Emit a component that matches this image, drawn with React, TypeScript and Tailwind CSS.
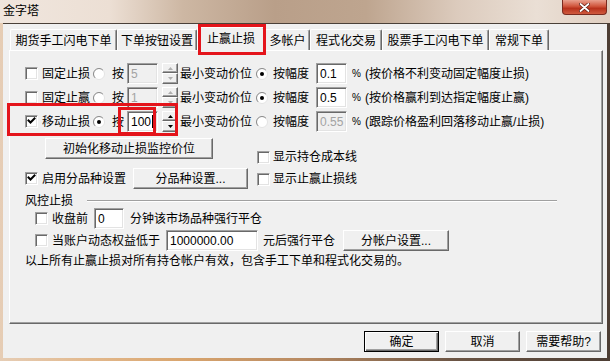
import React from "react";

const raised =
  "bg-[#f0f0f0] border border-t-white border-l-white border-b-[#696969] border-r-[#696969] shadow-[inset_-1px_-1px_#a0a0a0]";
const sunken =
  "border border-t-[#a0a0a0] border-l-[#a0a0a0] border-b-white border-r-white shadow-[inset_1px_1px_#696969,inset_-1px_-1px_#e3e3e3]";

function Check({ checked, className = "" }: { checked?: boolean; className?: string }) {
  return (
    <span className={`relative inline-block w-[13px] h-[13px] shrink-0 bg-white ${sunken} ${className}`}>
      {checked && (
        <svg className="absolute left-[1px] top-[1px]" width="9" height="9" viewBox="0 0 9 9">
          <path d="M1.5 3.5 L3.5 5.5 L7.5 1.5" stroke="#000" strokeWidth="2" fill="none" strokeLinecap="square" />
        </svg>
      )}
    </span>
  );
}

function Radio({ checked, className = "" }: { checked?: boolean; className?: string }) {
  return (
    <svg width="12" height="12" viewBox="0 0 12 12" className={`shrink-0 ${className}`}>
      <circle cx="6" cy="6" r="5.5" fill="#fff" stroke="#e3e3e3" />
      <path d="M2.11 9.89 A5.5 5.5 0 0 1 9.89 2.11" stroke="#8a8a8a" fill="none" />
      {checked && <circle cx="6" cy="6" r="2" fill="#000" />}
    </svg>
  );
}

function Input({ value, disabled, className = "", cursor }: { value: string; disabled?: boolean; className?: string; cursor?: boolean }) {
  return (
    <div
      className={`h-[21px] shrink-0 flex items-center pl-[3px] ${sunken} ${
        disabled ? "bg-[#f0f0f0] text-[#a3a3a3]" : "bg-white text-black"
      } ${className}`}
    >
      {value}
      {cursor && <span className="ml-[1px] w-[1px] h-[13px] bg-black" />}
    </div>
  );
}

function Spin({ disabled, className = "" }: { disabled?: boolean; className?: string }) {
  const c = disabled ? "#b0b0b0" : "#000";
  return (
    <div className={`w-[16px] h-[21px] shrink-0 flex flex-col ${className}`}>
      <div className={`h-[10px] flex items-center justify-center ${raised}`}>
        <svg width="5" height="3" viewBox="0 0 5 3">
          <path d="M2.5 0 L5 3 L0 3 Z" fill={c} />
        </svg>
      </div>
      <div className={`h-[11px] flex items-center justify-center ${raised}`}>
        <svg width="5" height="3" viewBox="0 0 5 3">
          <path d="M0 0 L5 0 L2.5 3 Z" fill={c} />
        </svg>
      </div>
    </div>
  );
}

function Btn({ children, className = "", def }: { children: React.ReactNode; className?: string; def?: boolean }) {
  return (
    <div
      className={`shrink-0 flex items-center justify-center ${
        def
          ? "bg-[#f0f0f0] border border-black shadow-[inset_1px_1px_white,inset_-1px_-1px_#696969,inset_-2px_-2px_#a0a0a0]"
          : raised
      } ${className}`}
    >
      {children}
    </div>
  );
}

function Tab({ label, className = "", selected }: { label: string; className?: string; selected?: boolean }) {
  return (
    <div
      className={`shrink-0 flex items-center justify-center rounded-t-[2px] border-l border-t border-r border-l-white border-t-white border-r-[#696969] shadow-[inset_-1px_0_#a0a0a0] bg-[#f0f0f0] ${
        selected ? "h-[24px] -mb-[1px] relative z-10 pb-[2px]" : "h-[21px] pt-[1px]"
      } ${className}`}
    >
      {label}
    </div>
  );
}

export default function App() {
  return (
    <div className="w-[610px] h-[361px] relative overflow-hidden font-['Liberation_Sans','Noto_Sans_CJK_SC',sans-serif] text-[12px] leading-none text-black bg-[linear-gradient(90deg,#e6cdb5_0%,#e2b88c_15%,#d9a56e_30%,#b88a62_50%,#6a5444_75%,#4d3e34_100%)]">
      {/* title bar */}
      <div className="h-[23px] flex justify-between bg-[linear-gradient(90deg,#f0e6de_0%,#ecdfd4_18%,#cdb7a3_30%,#b99f89_45%,#bea58f_60%,#dccbbd_75%,#eadfd5_88%,#e0cfc1_100%)]">
        <div className="pl-[3px] pt-[5px]">金字塔</div>
        <div className="mr-[3px] w-[45px] h-[15px] rounded-b-[4px] border border-t-0 border-[#7a2a1e] bg-[linear-gradient(#e9a08e,#d0553c_45%,#b8321c_60%,#cf5a3e)] flex items-center justify-center">
          <svg width="11" height="9" viewBox="0 0 11 9">
            <path d="M1.5 1 L9.5 8 M9.5 1 L1.5 8" stroke="#5a1a10" strokeWidth="3.2" strokeLinecap="round" />
            <path d="M1.5 1 L9.5 8 M9.5 1 L1.5 8" stroke="#fff" strokeWidth="1.8" strokeLinecap="round" />
          </svg>
        </div>
      </div>

      {/* client */}
      <div className="ml-[3px] w-[604px] h-[335px] bg-[#f0f0f0] border-t border-[#4a4038] flex flex-col">
        {/* tabs */}
        <div className="pt-[3px] pl-[7px] h-[26px] flex items-end">
          <Tab label="期货手工闪电下单" className="w-[107px]" />
          <Tab label="下单按钮设置" className="w-[80px]" />
          <Tab label="止赢止损" className="w-[68px]" selected />
          <Tab label="多帐户" className="w-[45px]" />
          <Tab label="程式化交易" className="w-[72px]" />
          <Tab label="股票手工闪电下单" className="w-[107px]" />
          <Tab label="常规下单" className="w-[60px]" />
        </div>

        {/* panel */}
        <div className={`ml-[6px] w-[594px] h-[274px] ${raised} flex flex-col pt-[12px]`}>
          <div className="flex flex-col gap-[3px]">
            <div className="flex items-center h-[21px]">
              <Check className="ml-[15px]" />
              <span className="ml-[4px] w-[48px]">固定止损</span>
              <Radio className="ml-[3px]" />
              <span className="ml-[7px]">按</span>
              <Input className="ml-[3px] w-[31px]" disabled value="5" />
              <Spin className="ml-[4px]" disabled />
              <span className="ml-[2px] w-[72px]">最小变动价位</span>
              <Radio className="ml-[4px]" checked />
              <span className="ml-[5px] w-[36px]">按幅度</span>
              <Input className="ml-[7px] w-[31px]" value="0.1" />
              <span className="ml-[5px] w-[6px] text-[10px]">%</span>
              <span className="ml-[7px]">(按价格不利变动固定幅度止损)</span>
            </div>
            <div className="flex items-center h-[21px]">
              <Check className="ml-[15px]" />
              <span className="ml-[4px] w-[48px]">固定止赢</span>
              <Radio className="ml-[3px]" />
              <span className="ml-[7px]">按</span>
              <Input className="ml-[3px] w-[31px]" disabled value="1" />
              <Spin className="ml-[4px]" disabled />
              <span className="ml-[2px] w-[72px]">最小变动价位</span>
              <Radio className="ml-[4px]" checked />
              <span className="ml-[5px] w-[36px]">按幅度</span>
              <Input className="ml-[7px] w-[31px]" value="0.5" />
              <span className="ml-[5px] w-[6px] text-[10px]">%</span>
              <span className="ml-[7px]">(按价格赢利到达指定幅度止赢)</span>
            </div>
            <div className="flex items-center h-[21px]">
              <Check className="ml-[15px]" checked />
              <span className="ml-[4px] w-[48px]">移动止损</span>
              <Radio className="ml-[3px]" checked />
              <span className="ml-[7px]">按</span>
              <Input className="ml-[3px] w-[31px]" value="100" cursor />
              <Spin className="ml-[4px]" />
              <span className="ml-[2px] w-[72px]">最小变动价位</span>
              <Radio className="ml-[4px]" />
              <span className="ml-[5px] w-[36px]">按幅度</span>
              <Input className="ml-[7px] w-[31px]" disabled value="0.55" />
              <span className="ml-[5px] w-[6px] text-[10px]">%</span>
              <span className="ml-[7px]">(跟踪价格盈利回落移动止赢/止损)</span>
            </div>
          </div>

          <div className="flex mt-[6px]">
            <div className="w-[247px] flex flex-col">
              <Btn className="ml-[35px] w-[168px] h-[21px]">初始化移动止损监控价位</Btn>
              <div className="flex items-center h-[21px] mt-[9px]">
                <Check className="ml-[15px]" checked />
                <span className="ml-[4px] w-[84px]">启用分品种设置</span>
                <Btn className="ml-[7px] w-[115px] h-[21px]">分品种设置...</Btn>
              </div>
            </div>
            <div className="flex flex-col pt-[12px] gap-[8px]">
              <div className="flex items-center h-[14px]">
                <Check />
                <span className="ml-[3px]">显示持仓成本线</span>
              </div>
              <div className="flex items-center h-[14px]">
                <Check />
                <span className="ml-[3px]">显示止赢止损线</span>
              </div>
            </div>
          </div>

          <div className="flex items-center h-[14px] mt-[5px]">
            <span className="ml-[15px] w-[48px]">风控止损</span>
            <div className="ml-[14px] w-[470px] h-[2px] border-t border-t-[#a0a0a0] border-b border-b-white" />
          </div>

          <div className="flex items-center h-[21px]">
            <Check className="ml-[25px]" />
            <span className="ml-[4px] w-[36px]">收盘前</span>
            <Input className="ml-[6px] w-[30px]" value="0" />
            <span className="ml-[6px]">分钟该市场品种强行平仓</span>
          </div>
          <div className="flex items-center h-[21px] mt-[1px]">
            <Check className="ml-[25px]" />
            <span className="ml-[4px] w-[108px]">当账户动态权益低于</span>
            <Input className="ml-[6px] w-[92px]" value="1000000.00" />
            <span className="ml-[5px] w-[72px]">元后强行平仓</span>
            <Btn className="ml-[8px] w-[106px] h-[21px]">分帐户设置...</Btn>
          </div>
          <div className="flex items-center h-[14px] mt-[3px] ml-[15px]">
            以上所有止赢止损对所有持仓帐户有效，包含手工下单和程式化交易的。
          </div>
        </div>

        {/* bottom buttons */}
        <div className="flex justify-end gap-[6px] pr-[6px] pt-[7px]">
          <Btn def className="w-[75px] h-[21px]">确定</Btn>
          <Btn className="w-[75px] h-[21px]">取消</Btn>
          <Btn className="w-[75px] h-[21px]">需要帮助?</Btn>
        </div>
      </div>

      {/* red annotation boxes */}
      <div className="absolute left-[198px] top-[24px] w-[68px] h-[31px] border-[3px] border-[#e4141b] z-20" />
      <div className="absolute left-[7px] top-[103px] w-[171px] h-[33px] border-[3px] border-[#e4141b] z-20" />
      <div className="absolute left-[118px] top-[107px] w-[38px] h-[28px] border-[3px] border-[#e4141b] z-20" />
    </div>
  );
}
